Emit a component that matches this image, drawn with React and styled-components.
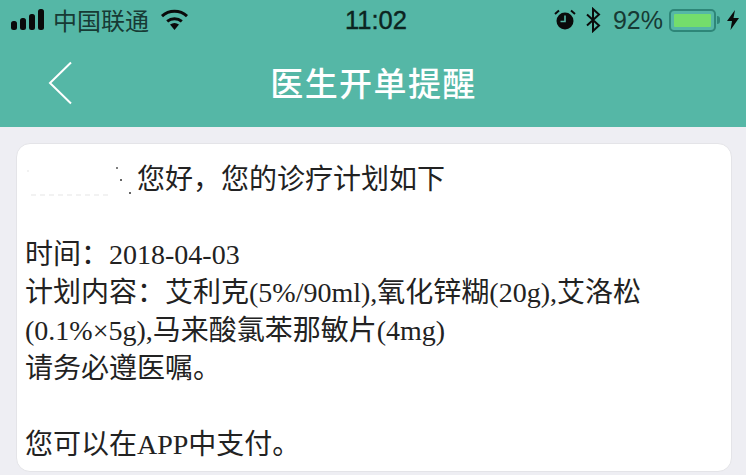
import React from "react";
import styled, { createGlobalStyle } from "styled-components";

const Global = createGlobalStyle`
  html, body { margin: 0; padding: 0; background: #eeeef3; }
  body { width: 746px; height: 475px; overflow: hidden; }
`;

const Page = styled.div`
  width: 746px;
  height: 475px;
  display: flex;
  flex-direction: column;
  background: #eeeef3;
`;

const Header = styled.header`
  height: 127px;
  flex: none;
  background: #55b7a6;
  display: flex;
  flex-direction: column;
`;

const StatusBar = styled.div`
  height: 40px;
  display: grid;
  grid-template-columns: 1fr auto 1fr;
  align-items: center;
  padding: 0 7px 0 11px;
  color: #12312c;
  font-family: "Noto Sans CJK SC", "Liberation Sans", sans-serif;
`;

const StatusLeft = styled.div`
  display: flex;
  align-items: center;
  gap: 8px;
`;

const Carrier = styled.span`
  font-size: 24px;
  line-height: 38px;
  color: #173a34;
  margin-right: 3px;
`;

const Clock = styled.span`
  font-family: "Liberation Sans", sans-serif;
  font-size: 25.5px;
  -webkit-text-stroke: 0.4px #0c2420;
  color: #0c2420;
  position: relative;
  left: 1px;
`;

const StatusRight = styled.div`
  display: flex;
  align-items: center;
  justify-content: flex-end;
  gap: 6px;
`;

const AlarmSlot = styled.div`
  display: flex;
  margin-right: 3px;
`;

const Percent = styled.span`
  font-family: "Liberation Sans", sans-serif;
  font-size: 25px;
  color: #173a34;
  margin-left: 6px;
`;

const BatteryWrap = styled.div`
  display: flex;
  align-items: center;
  gap: 1px;
  margin-right: 1px;
`;

const Battery = styled.div`
  width: 47px;
  height: 23px;
  box-sizing: border-box;
  border: 2px solid #2e8678;
  border-radius: 5px;
  padding: 3px;
  display: flex;
`;

const BatteryFill = styled.div`
  flex: 1;
  background: #74dd6c;
  border-radius: 1px;
`;

const BatteryTip = styled.div`
  width: 3px;
  height: 8px;
  background: #2e8678;
  border-radius: 0 3px 3px 0;
`;

const NavBar = styled.div`
  flex: 1;
  display: flex;
  align-items: center;
  justify-content: center;
  position: relative;
  padding-bottom: 4px;
`;

const BackIcon = styled.svg`
  position: absolute;
  left: 48px;
  top: 21px;
`;

const Title = styled.h1`
  margin: 0;
  color: #fff;
  font-family: "Noto Sans CJK SC", sans-serif;
  font-weight: 500;
  font-size: 33px;
  letter-spacing: 1.4px;
  line-height: 44px;
  text-indent: 1px;
`;

const Card = styled.main`
  margin: 16px 14px 3px 16px;
  flex: 1;
  box-sizing: border-box;
  background: #fff;
  border-radius: 14px;
  border: 1px solid #e4e4e8;
  padding: 16px 10px 0 8px;
  font-family: "Liberation Serif", "Noto Sans CJK SC", serif;
  font-size: 28px;
  line-height: 38px;
  color: #222;
`;

const Line = styled.div`
  min-height: 38px;
  white-space: nowrap;
`;

const Greeting = styled.div`
  display: flex;
  align-items: center;
  min-height: 38px;
  position: relative;
  top: 1px;
`;

const Redacted = styled.svg`
  flex: none;
`;

const Wifi = () => (
  <svg width="29" height="22" viewBox="0 0 29 22">
    <path d="M14.5 21 L10 15.6 A7.5 7.5 0 0 1 19 15.6 Z" fill="#0a0a0a" />
    <path d="M7.2 12.4 A11.5 11.5 0 0 1 21.8 12.4" fill="none" stroke="#0a0a0a" strokeWidth="3" />
    <path d="M2 7.2 A18.5 18.5 0 0 1 27 7.2" fill="none" stroke="#0a0a0a" strokeWidth="3" />
  </svg>
);

const Signal = () => (
  <svg width="34" height="22" viewBox="0 0 34 22">
    <rect x="0" y="12" width="6" height="9" rx="2.5" fill="#0a0a0a" />
    <rect x="9" y="9" width="6" height="12" rx="2.5" fill="#0a0a0a" />
    <rect x="18" y="5" width="6" height="16" rx="2.5" fill="#0a0a0a" />
    <rect x="27" y="0" width="6" height="21" rx="2.5" fill="#0a0a0a" />
  </svg>
);

const Alarm = () => (
  <svg width="22" height="22" viewBox="0 0 22 22">
    <circle cx="11" cy="12" r="8.5" fill="#0a0a0a" />
    <path d="M11 6.5V12.5H6.5" fill="none" stroke="#55b7a6" strokeWidth="1.6" />
    <path d="M1 5 L5 1.5 M21 5 L17 1.5" stroke="#0a0a0a" strokeWidth="2" />
  </svg>
);

const Bluetooth = () => (
  <svg width="16" height="26" viewBox="0 0 16 26">
    <path d="M2 7.5 L14 18.5 L8 24 V2 L14 7.5 L2 18.5" fill="none" stroke="#0a0a0a" strokeWidth="2" />
  </svg>
);

const Bolt = () => (
  <svg width="12" height="20" viewBox="0 0 12 20">
    <path d="M8 0 L0 11 H5 L3.5 20 L12 8 H6.5 Z" fill="#0a0a0a" />
  </svg>
);

export default function App() {
  return (
    <Page>
      <Global />
      <Header>
        <StatusBar>
          <StatusLeft>
            <Signal />
            <Carrier>中国联通</Carrier>
            <Wifi />
          </StatusLeft>
          <Clock>11:02</Clock>
          <StatusRight>
            <AlarmSlot>
              <Alarm />
            </AlarmSlot>
            <Bluetooth />
            <Percent>92%</Percent>
            <BatteryWrap>
              <Battery>
                <BatteryFill />
              </Battery>
              <BatteryTip />
            </BatteryWrap>
            <Bolt />
          </StatusRight>
        </StatusBar>
        <NavBar>
          <BackIcon width="26" height="44" viewBox="0 0 26 44">
            <path d="M23 1.5 L2 22 L23 42.5" fill="none" stroke="#fff" strokeWidth="2" />
          </BackIcon>
          <Title>医生开单提醒</Title>
        </NavBar>
      </Header>
      <Card>
        <Greeting>
          <Redacted width="112" height="38" viewBox="0 0 112 38">
            <circle cx="92" cy="7" r="1" fill="#555" />
            <circle cx="96" cy="19" r="1" fill="#333" />
            <circle cx="105" cy="32" r="1" fill="#333" />
            <path d="M6 34h80M2 10h2" stroke="#f2f2f2" strokeWidth="2" strokeDasharray="5 4" />
          </Redacted>
          <span>您好，您的诊疗计划如下</span>
        </Greeting>
        <Line />
        <Line>时间：2018-04-03</Line>
        <Line>计划内容：艾利克(5%/90ml),氧化锌糊(20g),艾洛松</Line>
        <Line>(0.1%×5g),马来酸氯苯那敏片(4mg)</Line>
        <Line>请务必遵医嘱。</Line>
        <Line />
        <Line>您可以在APP中支付。</Line>
      </Card>
    </Page>
  );
}
